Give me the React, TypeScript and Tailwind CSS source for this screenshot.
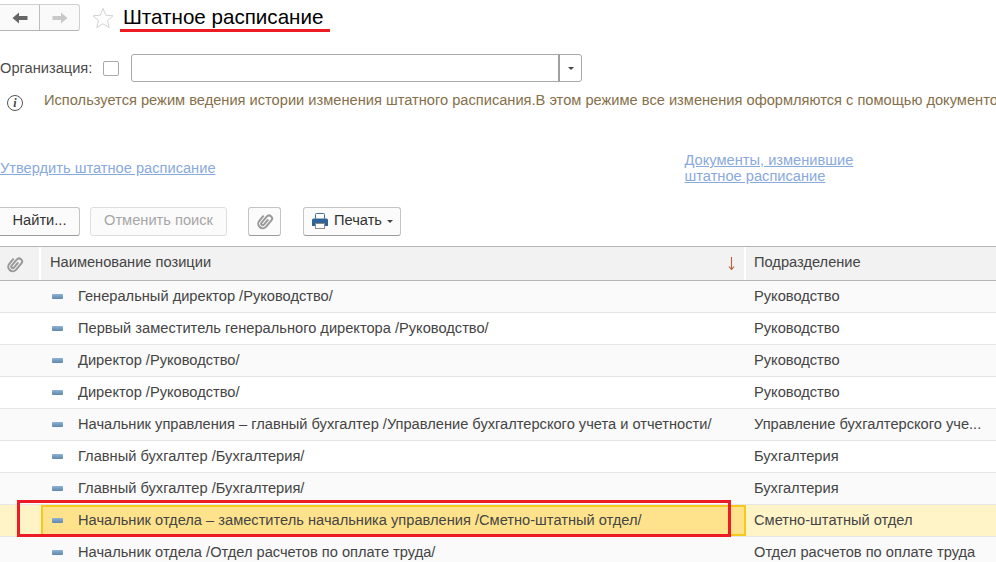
import React from "react";

const rows = [
  { name: "Генеральный директор /Руководство/", dept: "Руководство" },
  { name: "Первый заместитель генерального директора /Руководство/", dept: "Руководство" },
  { name: "Директор /Руководство/", dept: "Руководство" },
  { name: "Директор /Руководство/", dept: "Руководство" },
  { name: "Начальник управления – главный бухгалтер /Управление бухгалтерского учета и отчетности/", dept: "Управление бухгалтерского уче..." },
  { name: "Главный бухгалтер /Бухгалтерия/", dept: "Бухгалтерия" },
  { name: "Главный бухгалтер /Бухгалтерия/", dept: "Бухгалтерия" },
  { name: "Начальник отдела – заместитель начальника управления /Сметно-штатный отдел/", dept: "Сметно-штатный отдел", active: true },
  { name: "Начальник отдела /Отдел расчетов по оплате труда/", dept: "Отдел расчетов по оплате труда" },
];

const NavArrow = ({ color, flip }: { color: string; flip?: boolean }) => (
  <svg width="16" height="12" viewBox="0 0 16 12" className={flip ? "-scale-x-100" : ""}>
    <path d="M0.5 6 L7 0.5 V4 H15.5 V8 H7 V11.5 Z" fill={color} />
  </svg>
);

const Clip = () => (
  <svg width="18" height="20" viewBox="0 0 18 20" fill="none">
    <g transform="rotate(40 9 10)">
      <path
        d="M4.5 7.5v6a4.5 4.5 0 0 0 9 0V5.5a3 3 0 0 0-6 0v8a1.5 1.5 0 0 0 3 0V7.5"
        stroke="#999999"
        strokeWidth="2"
        strokeLinecap="round"
      />
    </g>
  </svg>
);

const PrinterIcon = () => (
  <svg width="18" height="16" viewBox="0 0 18 16">
    <path d="M4.5 5.5V1.5a1 1 0 0 1 1-1h7a1 1 0 0 1 1 1v4" fill="#fff" stroke="#3f6b96" />
    <path d="M1 7a1.5 1.5 0 0 1 1.5-1.5h13A1.5 1.5 0 0 1 17 7v6h-3v-2.5H4V13H1z" fill="#2f6296" />
    <rect x="4.5" y="10.5" width="9" height="5" fill="#fff" stroke="#8a8a8a" />
  </svg>
);

const App: React.FC = () => {
  return (
    <div className="relative h-[562px] w-[996px] overflow-hidden bg-white font-['Liberation_Sans',Arial,sans-serif] text-[14.65px] text-[#4b4b4b]">
      {/* TITLE */}
      <div className="flex h-[40px] items-start pt-[4px]">
        <div className="flex h-[27px] w-[80px] rounded-r-[3px] border border-l-0 border-[#d0d0d0] border-b-[#b5b5b5] bg-[#fafafa]">
          <div className="flex w-[40px] items-center justify-center border-r border-[#bdbdbd]">
            <NavArrow color="#666666" />
          </div>
          <div className="flex w-[39px] items-center justify-center">
            <NavArrow color="#c9c9c9" flip />
          </div>
        </div>
        <svg width="22" height="22" viewBox="0 0 22 22" className="ml-[12px] mt-[3px]" fill="none">
          <path d="M11 1.5 L13.8 8.2 L21 8.8 L15.5 13.5 L17.2 20.5 L11 16.8 L4.8 20.5 L6.5 13.5 L1 8.8 L8.2 8.2 Z" stroke="#d2d2d2" strokeWidth="1" />
        </svg>
        <h1 className="relative ml-[9px] text-[20.6px] leading-[26px] text-black">
          Штатное расписание
          <span className="absolute left-[-3px] top-[25px] h-[3px] w-[210px] bg-[#ed1c24]"></span>
        </h1>
      </div>

      {/* ORGANIZATION */}
      <div className="mt-[14px] flex h-[28px] items-center">
        <span className="pt-[2px]">Организация:</span>
        <span className="ml-[11px] h-[15px] w-[16px] rounded-[2px] border border-[#a8a8a8] bg-white"></span>
        <div className="ml-[12px] flex h-[28px] w-[451px] rounded-[3px] border border-[#a9a9a9]">
          <div className="flex-1"></div>
          <div className="flex w-[23px] items-center justify-center border-l-2 border-[#a0a0a0]">
            <span className="h-0 w-0 border-x-[3px] border-t-[3px] border-x-transparent border-t-[#444]"></span>
          </div>
        </div>
      </div>

      {/* INFO */}
      <div className="mt-[6px] flex h-[24px] items-center whitespace-nowrap">
        <span className="ml-[7px] mt-[6px] flex h-[16px] w-[16px] shrink-0 items-center justify-center rounded-full border-[1.5px] border-[#555] font-['Liberation_Serif',serif] text-[12px] font-bold italic text-[#444]">
          i
        </span>
        <span className="ml-[21px] pt-[2px] text-[#85704a]">
          Используется режим ведения истории изменения штатного расписания.В этом режиме все изменения оформляются с помощью документов
        </span>
      </div>

      {/* LINKS */}
      <div className="mt-[34px] flex h-[44px] items-center text-[#8aa9dc]">
        <a className="pt-[2px] underline">Утвердить штатное расписание</a>
        <a className="ml-[469px] underline leading-[16px]">
          Документы, изменившие
          <br />
          штатное расписание
        </a>
      </div>

      {/* COMMANDS */}
      <div className="mt-[16px] flex h-[30px] items-center">
        <button className="h-[29px] w-[80px] rounded-r-[3px] border border-l-0 border-[#c4c4c4] border-b-[#9a9a9a] bg-[#fbfbfb] text-[#333]">
          Найти...
        </button>
        <button className="ml-[10px] h-[29px] w-[137px] rounded-[3px] border border-[#dedede] bg-[#fbfbfb] text-[#a6a6a6]">
          Отменить поиск
        </button>
        <button className="ml-[21px] flex h-[29px] w-[33px] items-center justify-center rounded-[3px] border border-[#c4c4c4] border-b-[#9a9a9a] bg-[#fbfbfb]">
          <Clip />
        </button>
        <button className="ml-[22px] flex h-[29px] w-[98px] items-center rounded-[3px] border border-[#c4c4c4] border-b-[#9a9a9a] bg-[#fbfbfb] pl-[7px] text-[#333]">
          <PrinterIcon />
          <span className="ml-[5px]">Печать</span>
          <span className="ml-[5px] h-0 w-0 border-x-[3px] border-t-[3px] border-x-transparent border-t-[#444]"></span>
        </button>
      </div>

      {/* TABLE */}
      <div className="mt-[10px]">
        <div className="flex h-[35px] border-y border-y-[#b5b5b5] bg-[#f2f2f2]">
          <div className="flex w-[41px] items-center border-r-2 border-white pl-[6px]">
            <Clip />
          </div>
          <div className="flex w-[705px] items-center justify-between border-r-2 border-white pl-[9px] pr-[9px] text-[#444]">
            <span className="pb-[2px]">Наименование позиции</span>
            <svg width="7" height="13" viewBox="0 0 7 13" fill="none">
              <path d="M3.5 0V12.5M1 9.5L3.5 12.5L6 9.5" stroke="#b5603a" strokeWidth="1.1" />
            </svg>
          </div>
          <div className="flex flex-1 items-center pb-[2px] pl-[8px] text-[#444]">Подразделение</div>
        </div>

        {rows.map((row, i) => (
          <div
            key={i}
            className={`flex h-[32px] border-b border-[#e6e6e6] ${
              row.active ? "bg-[#fff4c8]" : i % 2 === 0 ? "bg-[#fafafa]" : "bg-white"
            }`}
          >
            <div className="w-[41px]"></div>
            <div
              className={`flex w-[705px] items-center ${
                row.active ? "border-2 border-[#f7c81e] bg-[#ffe38c] pl-[9px]" : "pl-[11px]"
              }`}
            >
              <span className="h-[5px] w-[11px] rounded-[1px] bg-linear-to-b from-[#8fb2d2] to-[#5f87ad]"></span>
              <span className="ml-[15px] whitespace-nowrap text-[#444]">{row.name}</span>
            </div>
            <div className="flex flex-1 items-center whitespace-nowrap pl-[8px] text-[#444]">{row.dept}</div>
          </div>
        ))}
      </div>

      {/* RED FRAME */}
      <div className="absolute left-[17px] top-[500px] h-[37px] w-[714px] border-[3px] border-[#ed1c24]"></div>
    </div>
  );
};

export default App;
